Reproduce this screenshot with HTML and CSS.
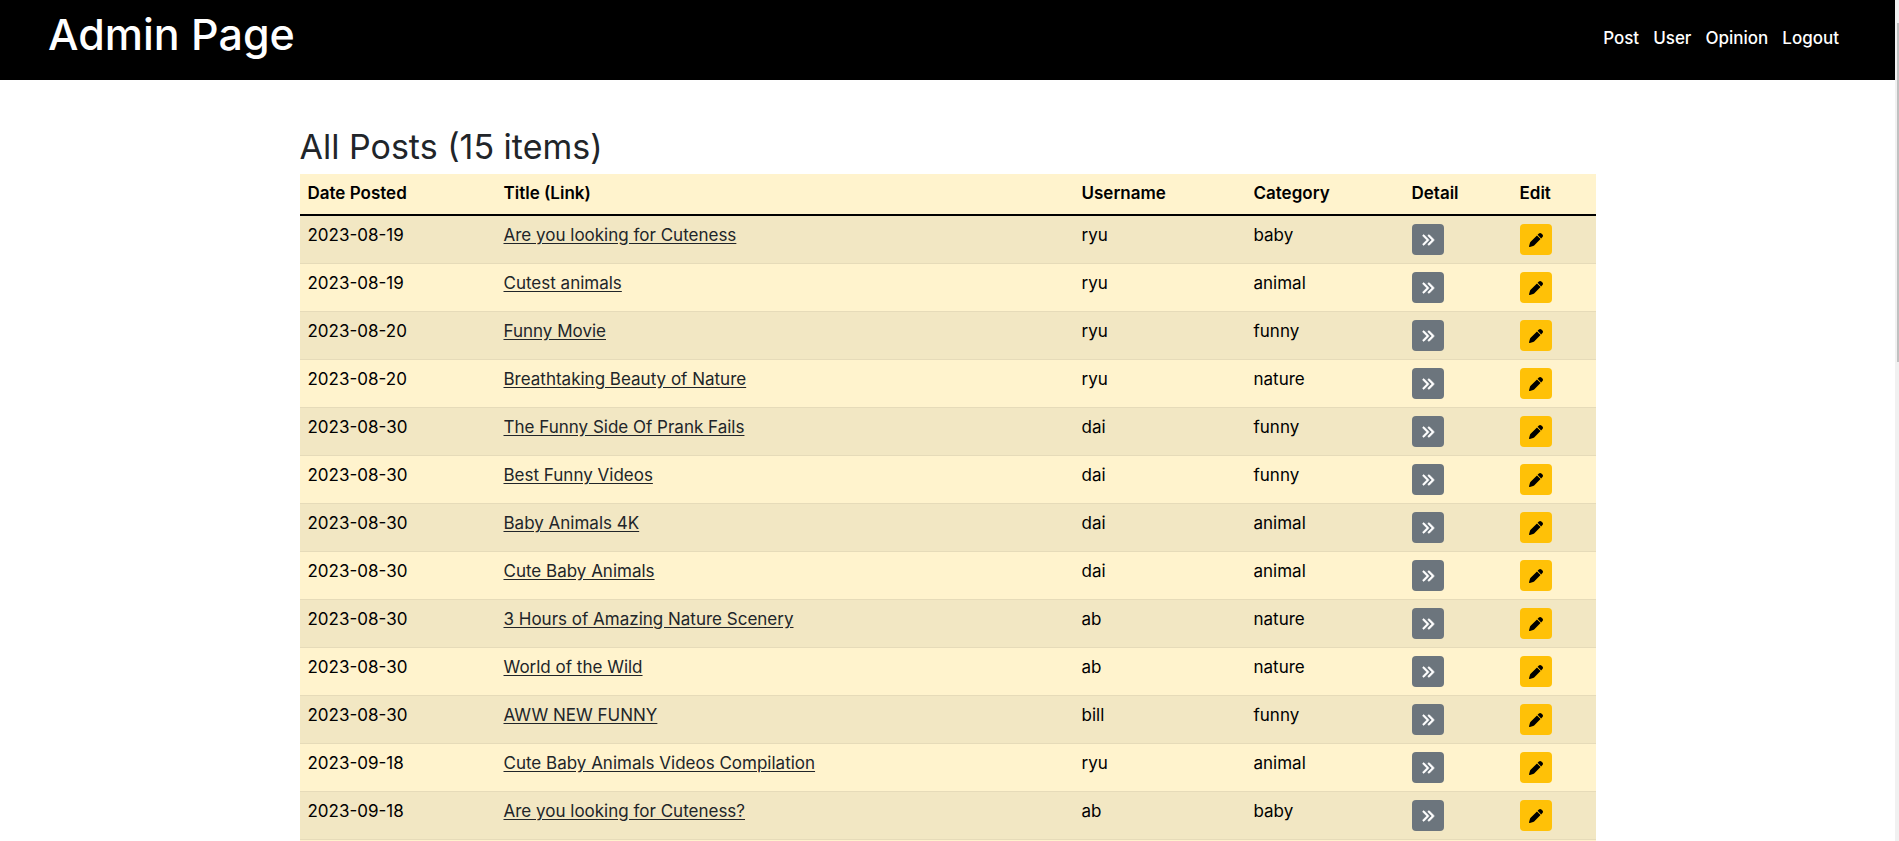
FILE: index.html
```html
<!DOCTYPE html>
<html lang="en">
<head>
<meta charset="utf-8">
<title>Admin Page</title>
<link rel="stylesheet" href="styles.css">
</head>
<body>
<svg class="sprite" aria-hidden="true">
  <symbol id="angles" viewBox="0 0 512 512"><path stroke="currentColor" stroke-width="22" d="M470.6 278.6c12.5-12.5 12.5-32.8 0-45.3l-160-160c-12.5-12.5-32.8-12.5-45.3 0s-12.5 32.8 0 45.3L402.7 256 265.4 393.4c-12.5 12.5-12.5 32.8 0 45.3s32.8 12.5 45.3 0l160-160zm-352 160l160-160c12.5-12.5 12.5-32.8 0-45.3l-160-160c-12.5-12.5-32.8-12.5-45.3 0s-12.5 32.8 0 45.3L210.7 256 73.4 393.4c-12.5 12.5-12.5 32.8 0 45.3s32.8 12.5 45.3 0z"/></symbol>
  <symbol id="pen" viewBox="0 0 512 512"><path d="M362.7 19.3L314.3 67.7 444.3 197.7l48.4-48.4c25-25 25-65.5 0-90.5L453.3 19.3c-25-25-65.5-25-90.5 0zm-71 71L58.6 323.5c-10.4 10.4-18 23.3-22.2 37.4L1 481.2C-1.5 489.7 .8 498.8 7 505s15.3 8.5 23.7 6.1l120.3-35.4c14.1-4.2 27-11.8 37.4-22.2L421.7 220.3 291.7 90.3z"/></symbol>
</svg>
<div class="page">
  <header class="topbar">
    <h1 class="brand">Admin Page</h1>
    <nav class="nav">
      <a href="#post">Post</a>
      <a href="#user">User</a>
      <a href="#opinion">Opinion</a>
      <a href="#logout">Logout</a>
    </nav>
  </header>
  <main class="container">
    <h2 class="heading">All Posts (15 items)</h2>
    <table class="posts">
      <colgroup><col class="c-date"><col class="c-title"><col class="c-user"><col class="c-cat"><col class="c-detail"><col class="c-edit"></colgroup>
      <thead>
        <tr><th scope="col">Date Posted</th><th scope="col">Title (Link)</th><th scope="col">Username</th><th scope="col">Category</th><th scope="col">Detail</th><th scope="col">Edit</th></tr>
      </thead>
      <tbody id="rows"></tbody>
    </table>
  </main>
</div>
<div class="scrollbar" aria-hidden="true"><div class="thumb"></div></div>
<script src="posts.js"></script>
</body>
</html>
```
FILE: styles.css
```css
* { box-sizing: border-box; }
body {
  margin: 0;
  height: 100vh;
  display: flex;
  overflow: hidden;
  font-family: Inter, "Open Sans", sans-serif;
  font-size: 17px;
  line-height: 22px;
  color: #212529;
  background: #fff;
}
.sprite { display: none; }
.page { flex: 1; min-width: 0; overflow: hidden; }
.topbar {
  display: flex;
  justify-content: space-between;
  align-items: flex-start;
  padding: 10px 56px 22px 48px;
  background: #000;
  color: #fff;
}
.brand { margin: 0; font-size: 43px; line-height: 48px; font-weight: 500; }
.nav { display: flex; gap: 14px; padding-top: 17px; font-weight: 500; }
.nav a { color: #fff; text-decoration: none; }
.container { max-width: 1320px; margin: 0 auto; padding: 48px 12px 0; }
.heading { margin: 0 0 8px; font-size: 34px; line-height: 38px; font-weight: 400; }
.posts { width: 100%; table-layout: fixed; border-collapse: separate; border-spacing: 0; background: #fff3cd; color: #000; }
.c-date { width: 196px; }
.c-user { width: 172px; }
.c-cat { width: 158px; }
.c-detail { width: 108px; }
.c-edit { width: 84px; }
.posts th, .posts td { padding: 8px; text-align: left; vertical-align: top; }
.posts th { height: 42px; font-weight: 600; border-bottom: 2px solid #000; }
.posts td { height: 48px; border-bottom: 1px solid #e6dbb9; }
.posts tbody tr:nth-child(odd) { background: #f2e7c3; }
.posts td a { color: #212529; text-underline-offset: 2px; }
.btn {
  display: block;
  width: 32px;
  height: 31px;
  padding: 0;
  border: 0;
  border-radius: 4px;
}
.btn svg { display: block; width: 14px; height: 14px; margin: 0 auto; fill: currentColor; }
.btn-detail { background: #6c757d; color: #fff; }
.btn-edit { background: #ffc107; color: #000; }
.scrollbar { width: 4px; background: #f1f1f1; padding: 23px 0 0 2px; }
.thumb { height: 339px; background: #c1c1c1; }
```
FILE: posts.js
```js
const posts = [
  ["2023-08-19", "Are you looking for Cuteness", "ryu", "baby"],
  ["2023-08-19", "Cutest animals", "ryu", "animal"],
  ["2023-08-20", "Funny Movie", "ryu", "funny"],
  ["2023-08-20", "Breathtaking Beauty of Nature", "ryu", "nature"],
  ["2023-08-30", "The Funny Side Of Prank Fails", "dai", "funny"],
  ["2023-08-30", "Best Funny Videos", "dai", "funny"],
  ["2023-08-30", "Baby Animals 4K", "dai", "animal"],
  ["2023-08-30", "Cute Baby Animals", "dai", "animal"],
  ["2023-08-30", "3 Hours of Amazing Nature Scenery", "ab", "nature"],
  ["2023-08-30", "World of the Wild", "ab", "nature"],
  ["2023-08-30", "AWW NEW FUNNY", "bill", "funny"],
  ["2023-09-18", "Cute Baby Animals Videos Compilation", "ryu", "animal"],
  ["2023-09-18", "Are you looking for Cuteness?", "ab", "baby"]
];
const button = (kind, icon, label) =>
  `<button type="button" class="btn btn-${kind}" aria-label="${label}"><svg aria-hidden="true"><use href="#${icon}"/></svg></button>`;
document.getElementById("rows").innerHTML = posts.map(([date, title, user, category]) =>
  `<tr><td>${date}</td><td><a href="#post">${title}</a></td><td>${user}</td><td>${category}</td>` +
  `<td>${button("detail", "angles", "Detail")}</td><td>${button("edit", "pen", "Edit")}</td></tr>`
).join("") + "<tr><td></td><td></td><td></td><td></td><td></td><td></td></tr>";
```
